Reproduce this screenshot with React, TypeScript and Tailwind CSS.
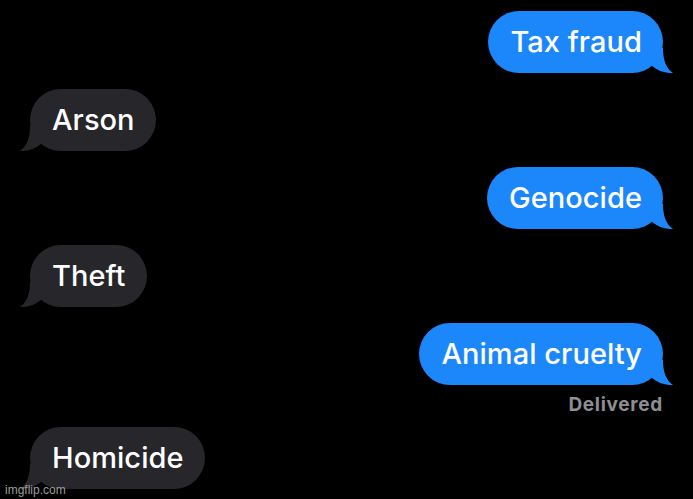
const Tail = ({ color, side }: { color: string; side: "left" | "right" }) => (
  <svg
    width="26"
    height="25"
    viewBox="0 0 26 25"
    className={
      side === "right"
        ? "absolute bottom-0 right-[-10px]"
        : "absolute bottom-0 left-[-10px] -scale-x-100"
    }
  >
    <path d="M0 0 H16 C16 12 19 20 26 25 C19 25.5 11 23 5 18 L0 14 Z" fill={color} />
  </svg>
);

const Bubble = ({ text, me }: { text: string; me?: boolean }) => {
  const color = me ? "#1b87fb" : "#27262b";
  return (
    <div className={me ? "flex justify-end" : "flex justify-start"}>
      <div
        className={`relative flex h-[62px] items-center rounded-[31px] pl-[22px] pr-[21px] text-[29px] font-medium leading-none tracking-[0.05px] text-white ${
          me ? "bg-[#1b87fb]" : "bg-[#27262b]"
        }`}
      >
        <span className="relative z-10 -mt-px">{text}</span>
        <Tail color={color} side={me ? "right" : "left"} />
      </div>
    </div>
  );
};

export default function App() {
  return (
    <div
      className="relative h-[499px] w-full overflow-hidden bg-black px-[30px] pt-[11px]"
      style={{ fontFamily: "Inter, 'Liberation Sans', sans-serif" }}
    >
      <div className="flex flex-col">
        <Bubble text="Tax fraud" me />
        <div className="mt-4">
          <Bubble text="Arson" />
        </div>
        <div className="mt-4">
          <Bubble text="Genocide" me />
        </div>
        <div className="mt-4">
          <Bubble text="Theft" />
        </div>
        <div className="mt-4">
          <Bubble text="Animal cruelty" me />
        </div>
        <div className="mt-[9px] h-[22px] text-right text-[19px] font-bold leading-[22px] tracking-[0.7px] text-[#8e8e93]">
          Delivered
        </div>
        <div className="mt-[11px]">
          <Bubble text="Homicide" />
        </div>
      </div>
      <div
        className="absolute bottom-[3px] left-[5px] text-[12px] leading-none text-[#9c9c9c]"
        style={{ fontFamily: "'Liberation Sans', Arial, sans-serif" }}
      >
        imgflip.com
      </div>
    </div>
  );
}
